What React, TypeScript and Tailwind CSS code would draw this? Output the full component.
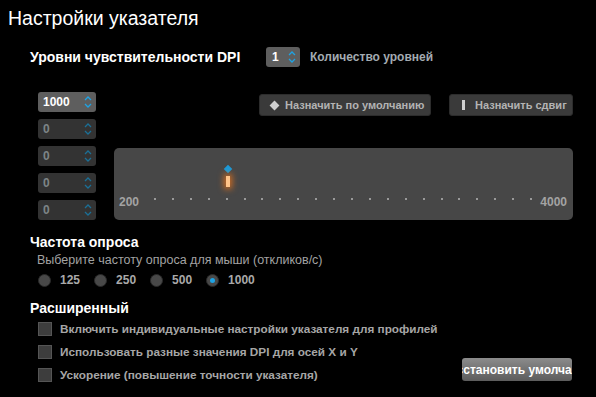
import React, { useState } from 'react';

const font = { fontFamily: '"Liberation Sans", Arial, sans-serif' };

const Arrows = ({ dim }: { dim?: boolean }) => (
  <svg width="8" height="14" viewBox="0 0 8 14" className="shrink-0">
    <path d="M1 5 L4 2 L7 5" fill="none" stroke={dim ? '#1b6f96' : '#1fa3e3'} strokeWidth="1.3" />
    <path d="M1 9 L4 12 L7 9" fill="none" stroke={dim ? '#1b6f96' : '#1fa3e3'} strokeWidth="1.3" />
  </svg>
);

const DpiBox = ({ value, active }: { value: string; active?: boolean }) => (
  <div
    className={`flex items-center justify-between h-[20px] w-[58px] rounded-[3px] pl-[5px] pr-[4px] ${
      active ? 'bg-[#5e5e5e]' : 'bg-[#333333]'
    }`}
  >
    <span className={`text-[12px] font-bold ${active ? 'text-white' : 'text-[#7d8587]'}`}>{value}</span>
    <Arrows dim={!active} />
  </div>
);

const Radio = ({ label, checked, onClick }: { label: string; checked: boolean; onClick: () => void }) => (
  <button onClick={onClick} className="flex items-center gap-[9px]">
    <span className="flex h-[13px] w-[13px] items-center justify-center rounded-full bg-[#484848] border border-[#2a2a2a]">
      {checked && <span className="h-[5px] w-[5px] rounded-full bg-[#1fa3e3]" />}
    </span>
    <span className="text-[12px] font-bold text-[#a9a9a9]">{label}</span>
  </button>
);

const Check = ({ label }: { label: string }) => (
  <div className="flex items-center gap-[8px] h-[23px]">
    <span className="h-[14px] w-[14px] bg-[#3d3d3d] border border-[#555555]" />
    <span className="text-[11.75px] font-bold text-[#a6a6a6]">{label}</span>
  </div>
);

export default function App() {
  const [rate, setRate] = useState('1000');
  const dots = Array.from({ length: 22 });

  return (
    <div className="w-[596px] h-[397px] overflow-hidden bg-black" style={font}>
      {/* Title */}
      <div className="pl-[8px] pt-[6px] h-[30px] text-[19.5px] leading-[24px] text-white">Настройки указателя</div>

      {/* DPI levels header */}
      <div className="flex items-center h-[20px] mt-[17px] pl-[30px]">
        <span className="text-[14px] font-bold text-white w-[236px]">Уровни чувствительности DPI</span>
        <div className="flex items-center justify-between h-[20px] w-[34px] rounded-[3px] bg-[#5e5e5e] pl-[6px] pr-[4px]">
          <span className="text-[12px] font-bold text-white">1</span>
          <Arrows />
        </div>
        <span className="ml-[10px] text-[12px] font-bold text-[#a3abb1]">Количество уровней</span>
      </div>

      {/* DPI editor */}
      <div className="flex mt-[25px] pl-[38px] pr-[23px] gap-[18px]">
        <div className="flex flex-col gap-[7px]">
          <DpiBox value="1000" active />
          <DpiBox value="0" />
          <DpiBox value="0" />
          <DpiBox value="0" />
          <DpiBox value="0" />
        </div>
        <div className="flex-1 pt-[2px]">
          <div className="flex justify-end gap-[18px]">
            <button className="flex items-center gap-[7px] h-[22px] w-[172px] pl-[10px] rounded-[3px] bg-[#3a3a3a] border border-[#2c2c2c] text-[11px] font-bold text-[#b3b3b3]">
              <span className="h-[7px] w-[7px] rotate-45 bg-[#cfcfcf] ml-[1px]" />
              Назначить по умолчанию
            </button>
            <button className="flex items-center gap-[10px] h-[22px] w-[124px] pl-[12px] rounded-[3px] bg-[#3a3a3a] border border-[#2c2c2c] text-[11px] font-bold text-[#b3b3b3]">
              <span className="h-[10px] w-[3px] bg-[#d0d0d0]" />
              Назначить сдвиг
            </button>
          </div>
          <div className="relative mt-[32px] h-[72px] rounded-[5px] bg-[#474747]">
            <div className="absolute left-[111px] top-[18px] h-[6px] w-[6px] rotate-45 bg-[#1b9ad9]" />
            <div className="absolute left-[112px] top-[28px] h-[11px] w-[4px] bg-[#ffc48a] shadow-[0_0_6px_2px_rgba(255,120,20,0.75)]" />
            <div className="flex items-center h-full pt-[36px] pl-[5px] pr-[6px]">
              <span className="text-[12px] font-bold text-[#a3a3a3]">200</span>
              <div className="flex flex-1 justify-between pl-[15px] pr-[8px] pb-[7px]">
                {dots.map((_, i) => (
                  <span key={i} className="h-[2px] w-[2px] bg-[#9a9a9a]" />
                ))}
              </div>
              <span className="text-[12px] font-bold text-[#a3a3a3]">4000</span>
            </div>
          </div>
        </div>
      </div>

      {/* Polling rate */}
      <div className="pl-[30px] mt-[14px]">
        <div className="text-[14px] font-bold text-white leading-[16px]">Частота опроса</div>
        <div className="pl-[7px] mt-[3px] text-[12.5px] text-[#a3a3a3] leading-[14px]">
          Выберите частоту опроса для мыши (откликов/с)
        </div>
        <div className="flex items-center gap-[14px] pl-[8px] mt-[5px] h-[16px]">
          {['125', '250', '500', '1000'].map((r) => (
            <Radio key={r} label={r} checked={rate === r} onClick={() => setRate(r)} />
          ))}
        </div>
      </div>

      {/* Advanced */}
      <div className="pl-[30px] pr-[24px] mt-[12px]">
        <div className="text-[14px] font-bold text-white leading-[16px]">Расширенный</div>
        <div className="flex items-end justify-between">
          <div className="pl-[8px] mt-[1px]">
            <Check label="Включить индивидуальные настройки указателя для профилей" />
            <Check label="Использовать разные значения DPI для осей X и Y" />
            <Check label="Ускорение (повышение точности указателя)" />
          </div>
          <button className="flex justify-center overflow-hidden whitespace-nowrap h-[23px] w-[110px] mb-[5px] items-center rounded-[3px] bg-gradient-to-b from-[#8c8c8c] to-[#5c5c5c] text-[12px] font-bold text-white">
            Восстановить умолчания
          </button>
        </div>
      </div>
    </div>
  );
}
